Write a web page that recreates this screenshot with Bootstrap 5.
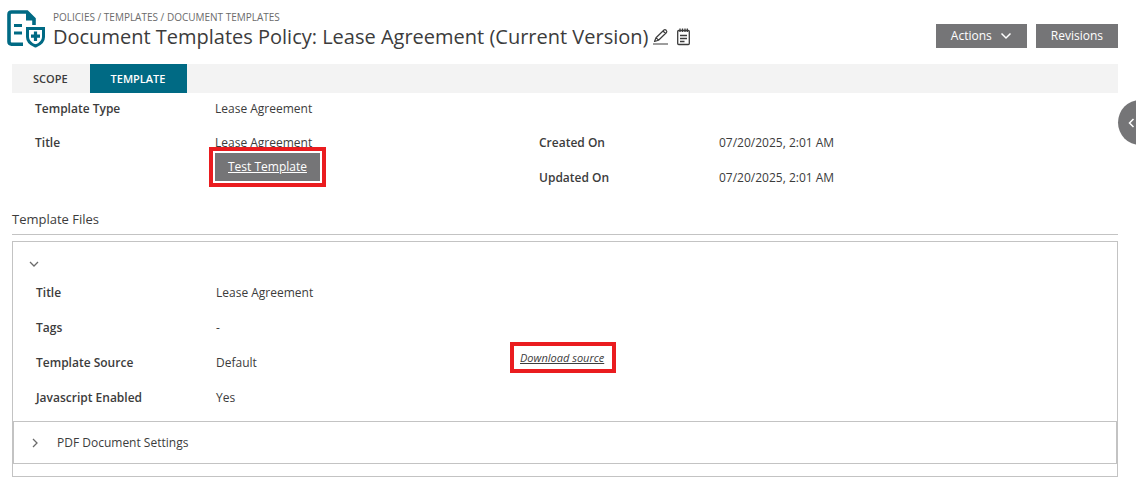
<!DOCTYPE html>
<html lang="en">
<head>
<meta charset="utf-8">
<meta name="viewport" content="width=device-width, initial-scale=1">
<title>Document Templates Policy: Lease Agreement</title>
<link href="https://cdn.jsdelivr.net/npm/bootstrap@5.3.0/dist/css/bootstrap.min.css" rel="stylesheet">
<style>
  body { font-family: "Open Sans", "Noto Sans", sans-serif; font-size: 12px; line-height: 20px; color: #3c3c3c; overflow-x: hidden; }
  a { color: inherit; }
  svg { display: block; flex: none; }
  .page { padding: 8px 18px 0 12px; }
  .page-head { min-height: 56px; }
  .page-icon { margin: 2px 7px 0 -5px; }
  .crumbs { font-size: 10px; line-height: 18px; color: #6b6b6b; }
  .crumbs a { text-decoration: none; }
  .page-title { font-size: 20px; line-height: 22px; font-weight: 400; margin: 0; }
  .icon-btn { border: 0; background: none; padding: 0; color: #3c3c3c; }
  .title-tools { gap: 8px; margin-left: 4px; }
  .btn-flat { --bs-btn-color: #fff; --bs-btn-bg: #757577; --bs-btn-border-color: #757577; --bs-btn-hover-color: #fff; --bs-btn-hover-bg: #5f5f61; --bs-btn-border-radius: 0; --bs-btn-font-size: 12px; --bs-btn-line-height: 22px; --bs-btn-padding-y: 0; --bs-btn-padding-x: 14px; }
  .head-actions { margin-top: 16px; gap: 9px; }
  .tab-strip { background: #f3f3f3; }
  .tab-strip .nav-link { color: #3c3c3c; font-size: 11px; font-weight: 600; line-height: 29px; padding: 0 22px 0 21px; border-radius: 0; }
  .tab-strip .nav-link.active { background: #006a84; color: #fff; }
  .summary { padding: 6px 75px 6px 23px; }
  .field { display: flex; min-height: 35px; margin: 0; }
  .field dt { width: 180px; flex: none; font-weight: 600; }
  .field dd { margin: 0; }
  .field-short { min-height: 34px; }
  .marked { outline: 4px solid #ea1c1f; outline-offset: 2px; }
  .test-btn { --bs-btn-padding-x: 12px; --bs-btn-line-height: 26px; line-height: 26px; text-decoration: underline; }
  .section-title { font-size: 13px; line-height: 20px; font-weight: 400; margin: 0; padding-bottom: 5px; border-bottom: 1px solid #c3c3c3; }
  .panel { border: 1px solid #c3c3c3; margin-top: 6px; padding-bottom: 12px; }
  .toggle-row { padding: 19px 16px; }
  .toggle-row { padding-bottom: 16px; }
  .panel-fields { padding: 0 0 0 23px; }
  .panel-fields dd { width: 294px; }
  .source-link { font-size: 11px; line-height: 23px; font-style: italic; border: 4px solid #ea1c1f; padding: 0 8px 0 6px; align-self: flex-start; margin-top: -11px; }
  .sub-panel { border: 1px solid #c3c3c3; padding: 11px 17px 10px; margin-top: -1px; }
  .side-tab { position: absolute; top: 100px; right: -26px; width: 44px; height: 45px; border: 0; border-radius: 50%; background: #757577; color: #fff; padding: 0 0 0 10px; }
</style>
</head>
<body>
<main class="page">
  <header class="page-head d-flex align-items-start">
    <svg class="page-icon" width="39" height="40" viewBox="0 0 39 40" fill="none" stroke="#006a84" aria-hidden="true">
      <path d="M16 34.200H4.500Q2 34.200 2 31.700V4.500Q2 2 4.500 2H20L27 9V15" stroke-width="3.600"/>
      <path d="M19 1L28.500 10.500H19Z" fill="#006a84" stroke="none"/>
      <path d="M7 15.500H15M7 23H15" stroke-width="3"/>
      <path d="M20.500 18.500H36.500V27Q36.500 33 28.500 36Q20.500 33 20.500 27Z" stroke-width="3"/>
      <path d="M28.500 21.500V31M24 26.200H33" stroke-width="3.200"/>
    </svg>
    <div class="me-auto">
      <nav class="crumbs" aria-label="Breadcrumb"><a href="#">POLICIES</a> / <a href="#">TEMPLATES</a> / <a href="#">DOCUMENT TEMPLATES</a></nav>
      <div class="d-flex align-items-center">
        <h1 class="page-title">Document Templates Policy: Lease Agreement (Current Version)</h1>
        <div class="title-tools d-flex">
          <button type="button" class="icon-btn" aria-label="Edit">
            <svg width="17" height="18" viewBox="0 0 17 18" fill="none" stroke="currentColor" stroke-width="1.200" stroke-linejoin="round"><path d="M2.500 13.500L4 9.700L12 2Q13 1.200 14.200 2.300Q15.300 3.400 14.500 4.500L6.500 12.200ZM4 9.700L6.500 12.200M11 3L13.500 5.500M1 16H16"/></svg>
          </button>
          <button type="button" class="icon-btn" aria-label="Notes">
            <svg width="13" height="18" viewBox="0 0 13 18" fill="none" stroke="currentColor" stroke-width="1.300"><rect x=".7" y="2.500" width="11.600" height="14" rx="1"/><path d="M3 .5V4M5.500 .5V4M8 .5V4M10.300 .5V4M3 7.500H10M3 10.500H10M3 13.500H7.500"/></svg>
          </button>
        </div>
      </div>
    </div>
    <div class="head-actions d-flex">
      <button type="button" class="btn btn-flat d-flex align-items-center">Actions
        <svg class="ms-2" width="12" height="8" viewBox="0 0 12 8" fill="none" stroke="currentColor" stroke-width="1.500" aria-hidden="true"><path d="M1.500 1.500L6 6L10.500 1.500"/></svg>
      </button>
      <button type="button" class="btn btn-flat">Revisions</button>
    </div>
  </header>

  <nav class="nav tab-strip" aria-label="Sections">
    <a class="nav-link" href="#">SCOPE</a>
    <a class="nav-link active" aria-current="page" href="#">TEMPLATE</a>
  </nav>

  <section class="summary">
    <dl class="field field-short"><dt>Template Type</dt><dd>Lease Agreement</dd></dl>
    <div class="row g-0">
      <div class="col-6">
        <dl class="field">
          <dt>Title</dt>
          <dd>Lease Agreement<br><a href="#" class="btn btn-flat test-btn marked">Test Template</a></dd>
        </dl>
      </div>
      <div class="col-6">
        <dl class="field"><dt>Created On</dt><dd>07/20/2025, 2:01 AM</dd></dl>
        <dl class="field"><dt>Updated On</dt><dd>07/20/2025, 2:01 AM</dd></dl>
      </div>
    </div>
  </section>

  <h2 class="section-title">Template Files</h2>
  <section class="panel">
    <div class="toggle-row">
      <button type="button" class="icon-btn d-block" aria-label="Collapse" aria-expanded="true">
        <svg width="10" height="6" viewBox="0 0 10 6" fill="none" stroke="#6b6b6b" stroke-width="1.300"><path d="M1 1L5 5L9 1"/></svg>
      </button>
    </div>
    <div class="panel-fields">
      <dl class="field"><dt>Title</dt><dd>Lease Agreement</dd></dl>
      <dl class="field"><dt>Tags</dt><dd>-</dd></dl>
      <div class="d-flex">
        <dl class="field"><dt>Template Source</dt><dd>Default</dd></dl>
        <a href="#" class="source-link">Download source</a>
      </div>
      <dl class="field field-short"><dt>Javascript Enabled</dt><dd>Yes</dd></dl>
    </div>
    <div class="sub-panel">
      <button type="button" class="icon-btn d-flex align-items-center" aria-expanded="false">
        <svg class="me-3" width="10" height="10" viewBox="0 0 10 10" fill="none" stroke="#6b6b6b" stroke-width="1.300" aria-hidden="true"><path d="M2 1L6 5L2 9"/></svg>
        PDF Document Settings
      </button>
    </div>
  </section>
</main>
<button type="button" class="side-tab" aria-label="Open side panel">
  <svg width="7" height="10" viewBox="0 0 7 10" fill="none" stroke="currentColor" stroke-width="1.500"><path d="M5.500 1L1.500 5L5.500 9"/></svg>
</button>
<script src="https://cdn.jsdelivr.net/npm/bootstrap@5.3.0/dist/js/bootstrap.bundle.min.js"></script>
</body>
</html>
